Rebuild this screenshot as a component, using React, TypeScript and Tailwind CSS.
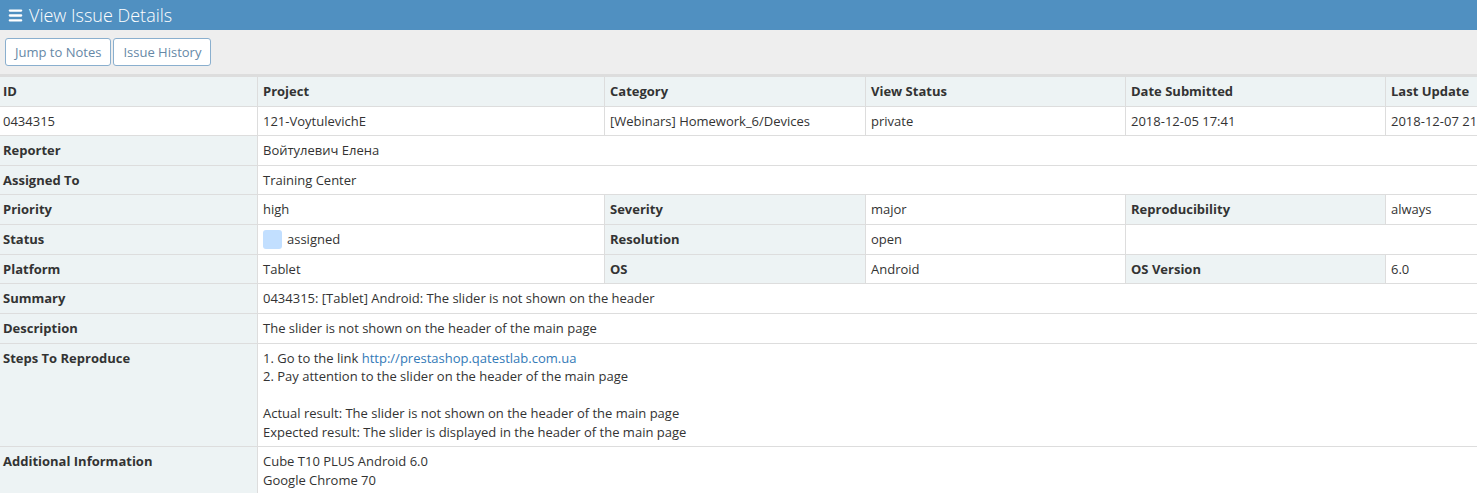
import { Menu } from "lucide-react"

const cat = "bg-[#edf3f4] font-bold border border-[#dddddd] px-[5px] py-[5px] align-top"
const val = "bg-white border border-[#dddddd] px-[5px] py-[5px] align-top"

const App = () => {
  return (
    <div className="w-[1477px] h-[493px] overflow-hidden bg-white text-[13px] leading-[1.42857] text-[#333333] font-['Open_Sans',sans-serif]">
      <div className="h-[30px] bg-[#5090c1] flex items-center pl-[7px] gap-[5px] text-white">
        <Menu className="w-[17px] h-[17px]" strokeWidth={3.2} />
        <span className="text-[18px] font-light leading-none">View Issue Details</span>
      </div>
      <div className="h-[46px] bg-[#eeeeee] flex items-start pt-[8px] pl-[5px] gap-[2px] border-b-2 border-[#dddddd]">
        <button className="h-[28px] px-[9px] bg-white border border-[#8aafce] rounded-[3px] text-[#6688a6]">Jump to Notes</button>
        <button className="h-[28px] px-[9px] bg-white border border-[#8aafce] rounded-[3px] text-[#6688a6]">Issue History</button>
      </div>
      <table className="table-fixed border-collapse w-[1505px] -ml-[3px]">
        <colgroup>
          <col className="w-[260px]" />
          <col className="w-[347px]" />
          <col className="w-[261px]" />
          <col className="w-[260px]" />
          <col className="w-[260px]" />
          <col className="w-[117px]" />
        </colgroup>
        <tbody>
          <tr>
            <td className={cat}>ID</td>
            <td className={cat}>Project</td>
            <td className={cat}>Category</td>
            <td className={cat}>View Status</td>
            <td className={cat}>Date Submitted</td>
            <td className={cat}>Last Update</td>
          </tr>
          <tr>
            <td className={val}>0434315</td>
            <td className={val}>121-VoytulevichE</td>
            <td className={val}>[Webinars] Homework_6/Devices</td>
            <td className={val}>private</td>
            <td className={val}>2018-12-05 17:41</td>
            <td className={val + " whitespace-nowrap"}>2018-12-07 21:05</td>
          </tr>
          <tr>
            <td className={cat}>Reporter</td>
            <td className={val} colSpan={5}>Войтулевич Елена</td>
          </tr>
          <tr>
            <td className={cat}>Assigned To</td>
            <td className={val} colSpan={5}>Training Center</td>
          </tr>
          <tr>
            <td className={cat}>Priority</td>
            <td className={val}>high</td>
            <td className={cat}>Severity</td>
            <td className={val}>major</td>
            <td className={cat}>Reproducibility</td>
            <td className={val}>always</td>
          </tr>
          <tr>
            <td className={cat}>Status</td>
            <td className={val}>
              <span className="flex items-center gap-[5px]">
                <span className="inline-block w-[19px] h-[19px] rounded-[3px] bg-[#c2dfff]" />
                assigned
              </span>
            </td>
            <td className={cat}>Resolution</td>
            <td className={val}>open</td>
            <td className={val} colSpan={2}>&nbsp;</td>
          </tr>
          <tr>
            <td className={cat}>Platform</td>
            <td className={val}>Tablet</td>
            <td className={cat}>OS</td>
            <td className={val}>Android</td>
            <td className={cat}>OS Version</td>
            <td className={val}>6.0</td>
          </tr>
          <tr>
            <td className={cat}>Summary</td>
            <td className={val} colSpan={5}>0434315: [Tablet] Android: The slider is not shown on the header</td>
          </tr>
          <tr>
            <td className={cat}>Description</td>
            <td className={val} colSpan={5}>The slider is not shown on the header of the main page</td>
          </tr>
          <tr>
            <td className={cat}>Steps To Reproduce</td>
            <td className={val} colSpan={5}>
              1. Go to the link <a href="#" className="text-[#337ab7]">http://prestashop.qatestlab.com.ua</a>
              <br />
              2. Pay attention to the slider on the header of the main page
              <br />
              <br />
              Actual result: The slider is not shown on the header of the main page
              <br />
              Expected result: The slider is displayed in the header of the main page
            </td>
          </tr>
          <tr>
            <td className={cat}>Additional Information</td>
            <td className={val} colSpan={5}>
              Cube T10 PLUS Android 6.0
              <br />
              Google Chrome 70
            </td>
          </tr>
        </tbody>
      </table>
    </div>
  )
}

export default App
